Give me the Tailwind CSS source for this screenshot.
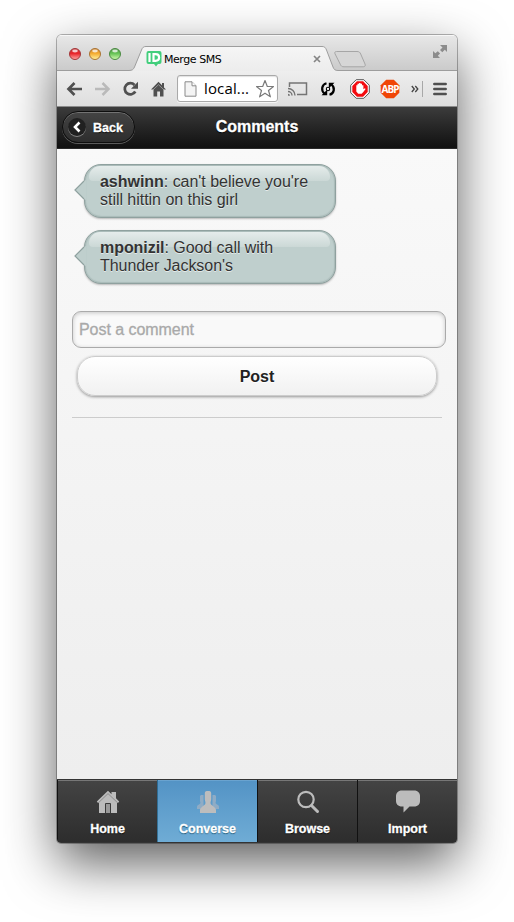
<!DOCTYPE html>
<html lang="en">
<head>
<meta charset="utf-8">
<title>Merge SMS</title>
<script src="https://cdn.jsdelivr.net/npm/@tailwindcss/browser@4"></script>
</head>
<body class="bg-white overflow-hidden font-['Liberation_Sans',Arial,sans-serif]">
<div class="w-[514px] h-[922px] pl-[57px] pt-[35px]">
<div class="w-[400px] h-[808px] flex flex-col rounded-t-[5px] rounded-b-[4px] overflow-hidden shadow-[0_20px_52px_rgba(0,0,0,0.64),0_0_0_1px_rgba(0,0,0,0.28)]">

  <!-- Title bar with tab strip -->
  <div class="relative h-9 shrink-0 bg-linear-to-b from-[#e8e8e8] to-[#cacaca]">
    <svg class="absolute left-0 top-0" width="400" height="37" viewBox="0 0 400 37">
      <defs>
        <linearGradient id="tab" x1="0" y1="0" x2="0" y2="1"><stop offset="0" stop-color="#f6f6f6"/><stop offset="1" stop-color="#ececec"/></linearGradient>
        <linearGradient id="red" x1="0" y1="0" x2="0" y2="1"><stop offset="0" stop-color="#c43a3c"/><stop offset=".45" stop-color="#e9262b"/><stop offset="1" stop-color="#ffaaa6"/></linearGradient>
        <linearGradient id="yel" x1="0" y1="0" x2="0" y2="1"><stop offset="0" stop-color="#c97e2d"/><stop offset=".45" stop-color="#f5ac32"/><stop offset="1" stop-color="#fff3a0"/></linearGradient>
        <linearGradient id="grn" x1="0" y1="0" x2="0" y2="1"><stop offset="0" stop-color="#4e9444"/><stop offset=".45" stop-color="#67c356"/><stop offset="1" stop-color="#d3fbb0"/></linearGradient>
      </defs>
      <path d="M0 .5H400" stroke="#f7f7f7"/>
      <path d="M0 35.5H72c3 0 4.500-1 5.500-3.500L84.500 15c1-2.500 2-3.500 4.500-3.500H265c2.500 0 3.500 1 4.500 3.500L276 32c1 2.500 2 3.500 5 3.500H400V37H0Z" fill="url(#tab)" stroke="#9d9d9d"/>
      <path d="M0 36.500H400" stroke="#eeeeee"/>
      <path d="M279.500 16.500H300c2 0 3 .7 3.700 2.500l4.300 10c.7 1.800 0 2.800-1.800 2.800H287c-2 0-3-.7-3.700-2.500L278 18.800c-.6-1.500 0-2.300 1.500-2.300Z" fill="#d6d6d6" stroke="#a6a6a6"/>
      <g stroke-width="1">
        <circle cx="18" cy="19" r="5.500" fill="url(#red)" stroke="#a2383a"/><ellipse cx="18" cy="16" rx="2.800" ry="1.400" fill="#fff" opacity=".75"/>
        <circle cx="38" cy="19" r="5.500" fill="url(#yel)" stroke="#a97435"/><ellipse cx="38" cy="16" rx="2.800" ry="1.400" fill="#fff" opacity=".75"/>
        <circle cx="58" cy="19" r="5.500" fill="url(#grn)" stroke="#4b8a43"/><ellipse cx="58" cy="16" rx="2.800" ry="1.400" fill="#fff" opacity=".75"/>
      </g>
      <path d="M91.500 16h11a2 2 0 0 1 2 2v9a2 2 0 0 1-2 2H101l-2 2.500L97 29h-5.500a2 2 0 0 1-2-2v-9a2 2 0 0 1 2-2Z" fill="#42ce7c"/>
      <path d="M92.500 18v9M96.500 19.200v6.600h2c4.800 0 4.800-6.600 0-6.600Z" fill="none" stroke="#fff" stroke-width="2.200"/>
      <path d="m257 21 6 6m0-6-6 6" stroke="#858585" stroke-width="1.700"/>
      <g fill="#8c8c8c"><path d="M383 10h7v7l-2.200-2.200-2.500 2.500-2.300-2.300 2.500-2.500Z"/><path d="M376 16v7h7l-2.200-2.200 2.300-2.300-2.300-2.300-2.500 2.100Z"/></g>
    </svg>
    <div class="relative pl-[107px] pt-[18px] text-[11px] leading-[14px] tracking-[-0.45px] text-black whitespace-nowrap font-['DejaVu_Sans',sans-serif]">Merge SMS</div>
  </div>

  <!-- Toolbar -->
  <div class="h-9 shrink-0 flex items-center bg-linear-to-b from-[#eeeeee] to-[#dedede] border-b border-[#8b8b8b] pl-[9px]">
    <svg class="shrink-0" width="17" height="16" viewBox="0 0 17 16"><path d="M16 8H3M8.500 2 2.500 8l6 6" fill="none" stroke="#505050" stroke-width="2.700"/></svg>
    <svg class="shrink-0 ml-[11px]" width="17" height="16" viewBox="0 0 17 16"><path d="M1 8h13M8.500 2l6 6-6 6" fill="none" stroke="#bababa" stroke-width="2.500"/></svg>
    <svg class="shrink-0 ml-[11px]" width="17" height="16" viewBox="0 0 17 16"><path d="M13.300 10.500A5.600 5.600 0 1 1 12.500 4" fill="none" stroke="#505050" stroke-width="2.700"/><path d="M16 .8v7H9Z" fill="#505050"/></svg>
    <svg class="shrink-0 ml-[12px]" width="16" height="16" viewBox="0 0 16 16"><path d="M7.500.8 0 8.500h2.500v7h3.700v-5h2.800v5h3.500v-7H15l-2-2V2h-2v2.300Z" fill="#505050"/><path d="M1.700 9.200 7.500 3.700l5.800 5.500" fill="none" stroke="#c0c0c0" stroke-width=".6"/></svg>
    <div class="shrink-0 ml-[10px] w-[101px] h-[27px] rounded-[3px] border border-[#a9a9a9] bg-white flex items-center pl-[6px] shadow-[inset_0_1px_1px_rgba(0,0,0,0.12),0_1px_0_rgba(255,255,255,0.7)]">
      <svg class="shrink-0" width="13" height="16" viewBox="0 0 13 16"><path d="M1 .8h7l4 4v10.400H1Z" fill="#f4f4f4" stroke="#8a8a8a"/><path d="M8 .8v4h4" fill="#fff" stroke="#8a8a8a"/></svg>
      <span class="ml-[7px] pb-[2px] w-[46px] text-[15px] leading-5 tracking-[0.15px] text-black whitespace-nowrap font-['Open_Sans',sans-serif]">local...</span>
      <svg class="shrink-0 ml-[5px]" width="20" height="20" viewBox="0 0 20 20"><path d="m10 1.500 2.300 6h6.200l-5 4 1.900 6.300L10 14.200l-5.400 3.600 1.900-6.300-5-4h6.200Z" fill="#fff" stroke="#7b7b7b" stroke-width="1.200" stroke-linejoin="round"/></svg>
    </div>
    <svg class="shrink-0 ml-[9px]" width="21" height="16" viewBox="0 0 21 16"><path d="M2.500 6V2h17v11.500H10" fill="none" stroke="#747474" stroke-width="1.500"/><path d="M1 7.500a7 7 0 0 1 7 7M1 10.500a4 4 0 0 1 4 4" fill="none" stroke="#747474" stroke-width="1.400"/><path d="M1 12.800a2 2 0 0 1 2 2H1Z" fill="#747474"/></svg>
    <svg class="shrink-0 ml-[12px]" width="16" height="16" viewBox="0 0 16 16"><path d="M6.500 2.200C1.500 3.500.8 9.500 4.500 12.500M9.500 13.800c5-1.300 5.700-7.300 2-10.300" fill="none" stroke="#000" stroke-width="2.200"/><path d="M1.500 14.300h5.700V8.800ZM14.500 1.700H8.800V7.200Z" fill="#000"/><circle cx="8" cy="8" r="1.700" fill="#eee" stroke="#000" stroke-width="1.100"/></svg>
    <svg class="shrink-0 ml-[14px]" width="20" height="20" viewBox="0 0 20 20"><path d="M6.200.7h7.600l5.500 5.500v7.600l-5.500 5.500H6.200L.7 13.800V6.200Z" fill="#fff" stroke="#555" stroke-width="1"/><path d="M6.900 2.300h6.200l4.600 4.600v6.200l-4.600 4.600H6.900l-4.600-4.600V6.900Z" fill="#f30c10"/><path d="M6.300 6.200h1.200v-1.400h1.500v-.8h1.500v.8H12v1.500h1.400v4l1.400-1 .8.700-2.500 3.300-1.500 1.500H8.200L6.300 12.500Z" fill="#fff"/></svg>
    <div class="shrink-0 ml-[10px] relative w-5 h-5">
      <svg class="absolute inset-0" width="20" height="20" viewBox="0 0 20 20"><path d="M6.200.7h7.600l5.500 5.500v7.600l-5.500 5.500H6.200L.7 13.800V6.200Z" fill="#f04607"/></svg>
      <span class="relative flex items-center justify-center h-5 pt-px text-[10px] font-bold tracking-[-0.9px] text-white font-['Open_Sans',sans-serif]">ABP</span>
    </div>
    <svg class="shrink-0 ml-[11px]" width="8" height="8" viewBox="0 0 8 8"><path d="m.8 1 2.500 3L.8 7M4.300 1l2.500 3-2.500 3" fill="none" stroke="#444" stroke-width="1.300"/></svg>
    <div class="shrink-0 ml-[3px] w-px h-4 bg-[#a8a8a8]"></div>
    <svg class="shrink-0 ml-[10px]" width="14" height="14" viewBox="0 0 14 14"><path d="M1.300 2h11.400M1.300 7h11.400M1.300 12h11.400" stroke="#505050" stroke-width="2.500" stroke-linecap="round"/></svg>
  </div>

  <!-- App header -->
  <div class="relative h-[42px] shrink-0 flex items-center justify-center bg-linear-to-b from-[#3c3c3c] to-[#111111] border-b border-[#2a2a2a]">
    <div class="absolute left-[5px] top-[4px] w-[73px] h-[32px] rounded-full border border-[#0e0e0e] bg-linear-to-b from-[#444444] to-[#2d2d2d] flex items-center pl-[5px] shadow-[inset_0_1px_0_rgba(255,255,255,0.25),0_1px_0_rgba(255,255,255,0.3)]">
      <span class="w-[18px] h-[18px] rounded-full bg-[#202020] flex items-center justify-center shadow-[0_1px_0_rgba(255,255,255,0.4)]">
        <svg width="10" height="12" viewBox="0 0 10 12"><path d="M7.500 1.500 3 6l4.500 4.500" fill="none" stroke="#fff" stroke-width="2.600"/></svg>
      </span>
      <span class="ml-[7px] pt-px text-[12.5px] leading-4 font-bold text-white [-webkit-text-stroke:0.3px_#fff] [text-shadow:0_1px_1px_#000]">Back</span>
    </div>
    <h1 class="text-[16px] leading-5 font-bold text-white pb-[2px] [-webkit-text-stroke:0.3px_#fff] [text-shadow:0_1px_1px_#000]">Comments</h1>
  </div>

  <!-- Comments -->
  <main class="h-[630px] shrink-0 bg-linear-to-b from-[#f9f9f9] to-[#eeeeee] pl-[15px] pt-[15px] text-[16px]">
    <div class="flex flex-col gap-[12px] pl-[12px]">
      <div class="relative w-[252px] h-[54px] rounded-[17px] border-[1.5px] border-[#8fa19f] bg-[#bfcfcd] px-[15px] pt-[8px] leading-[18px] text-[#333333] shadow-[inset_0_0_1px_1px_rgba(143,161,159,0.45),0_1px_2px_rgba(0,0,0,0.25)]">
        <span class="absolute left-[4px] top-[1px] w-[241px] h-[15px] rounded-t-[14px] rounded-b-[5px] bg-linear-to-b from-[#e5eceb] to-[#cbd8d6]"></span>
        <svg class="absolute -left-[11px] top-[14px]" width="12" height="22" viewBox="0 0 12 22"><path d="M12 1 10 2 1 11l9 9 2 1Z" fill="#bfcfcd"/><path d="M10 2 1 11l9 9" fill="none" stroke="#8fa19f" stroke-width="1.200"/></svg>
        <p class="relative tracking-[-0.03px] [text-shadow:0_1px_0_rgba(255,255,255,0.6)]"><b>ashwinn</b>: can't believe you're<br>still hittin on this girl</p>
      </div>
      <div class="relative w-[252px] h-[54px] rounded-[17px] border-[1.5px] border-[#8fa19f] bg-[#bfcfcd] px-[15px] pt-[8px] leading-[18px] text-[#333333] shadow-[inset_0_0_1px_1px_rgba(143,161,159,0.45),0_1px_2px_rgba(0,0,0,0.25)]">
        <span class="absolute left-[4px] top-[1px] w-[241px] h-[15px] rounded-t-[14px] rounded-b-[5px] bg-linear-to-b from-[#e5eceb] to-[#cbd8d6]"></span>
        <svg class="absolute -left-[11px] top-[14px]" width="12" height="22" viewBox="0 0 12 22"><path d="M12 1 10 2 1 11l9 9 2 1Z" fill="#bfcfcd"/><path d="M10 2 1 11l9 9" fill="none" stroke="#8fa19f" stroke-width="1.200"/></svg>
        <p class="relative tracking-[-0.05px] [text-shadow:0_1px_0_rgba(255,255,255,0.6)]"><b>mponizil</b>: Good call with<br>Thunder Jackson's</p>
      </div>
    </div>
    <div class="mt-[27px] w-[374px] h-[37px] rounded-[9px] border border-[#aaaaaa] bg-[#f9f9f9] flex items-center px-[6px] text-[#a9a9a9] tracking-[-0.05px] [-webkit-text-stroke:0.3px_#a9a9a9] shadow-[inset_0_1px_4px_rgba(0,0,0,0.2)]">Post a comment</div>
    <div class="mt-[8px] ml-[5px] w-[360px] h-[40px] rounded-[18px] border border-[#cccccc] bg-linear-to-b from-white to-[#f1f1f1] flex items-center justify-center font-bold text-[#222222] shadow-[0_1px_3px_rgba(0,0,0,0.4)] [text-shadow:0_1px_0_#fff]"><span class="pt-px">Post</span></div>
    <div class="mt-[21px] w-[370px] h-px bg-[#cccccc]"></div>
  </main>

  <!-- Bottom navigation -->
  <nav class="flex-1 grid grid-cols-4 border-t border-b border-[#333333] text-[12.5px] font-bold leading-4 text-white text-center [-webkit-text-stroke:0.3px_#fff] [text-shadow:0_1px_1px_#000]">
    <div class="border-l border-[#111111] shadow-[inset_0_1px_0_#777777] bg-linear-to-b from-[#444444] to-[#2d2d2d] flex flex-col items-center pt-[10px]">
      <svg width="24" height="24" viewBox="0 0 24 24"><path d="M.8 11.500 12 .8l3.500 3.400V2H20v6.200l3.200 3.300-1 1.200H21V23H3V12.700H1.800Z" fill="#bcbcbc"/><path d="M2.500 12.700 12 3.600l9.500 9.100" fill="none" stroke="#777" stroke-width=".7"/><path d="M9.500 23V13.500h5V23" fill="#999" stroke="#3a3a3a"/></svg>
      <span class="mt-[7px]">Home</span>
    </div>
    <div class="border-l border-[#145072]/60 shadow-[inset_0_1px_0_#6aa3cf] bg-linear-to-b from-[#5393c5] to-[#6facd5] flex flex-col items-center pt-[10px] [text-shadow:0_1px_1px_#145072]">
      <svg width="24" height="24" viewBox="0 0 24 24"><path d="M5 5h2.500v14H1v-2.500c0-1.500 3-2 3.500-3.500L4 11V6ZM16.500 5H19l1 1v5l-.5 2c.5 1.500 3.500 2 3.500 3.500V19h-6.500Z" fill="#8facc5"/><path d="M10.800 1h2.400c1.300 0 2 1 2 2.500V9c0 1.500-.7 2.500-.7 4 0 2.500 5.500 4 5.500 7v3H4v-3c0-3 5.500-4.500 5.500-7 0-1.500-.7-2.500-.7-4V3.500C8.800 2 9.500 1 10.800 1Z" fill="#bdbdbd"/></svg>
      <span class="mt-[7px]">Converse</span>
    </div>
    <div class="border-l border-[#111111] shadow-[inset_0_1px_0_#777777] bg-linear-to-b from-[#444444] to-[#2d2d2d] flex flex-col items-center pt-[10px]">
      <svg width="24" height="24" viewBox="0 0 24 24"><circle cx="10" cy="9.500" r="7.700" fill="none" stroke="#bcbcbc" stroke-width="2.200"/><path d="m15.500 15.500 6 6" stroke="#bcbcbc" stroke-width="3" stroke-linecap="round"/></svg>
      <span class="mt-[7px]">Browse</span>
    </div>
    <div class="border-l border-[#111111] shadow-[inset_0_1px_0_#777777] bg-linear-to-b from-[#444444] to-[#2d2d2d] flex flex-col items-center pt-[10px]">
      <svg width="24" height="24" viewBox="0 0 24 24"><path d="M6 .5h12c4 0 6 2.500 6 5.500v5c0 3-2 5.500-6 5.500h-4.500L7.500 22.500v-6H6c-4 0-6-2.500-6-5.500V6C0 3 2 .5 6 .5Z" fill="#bcbcbc"/></svg>
      <span class="mt-[7px]">Import</span>
    </div>
  </nav>
</div>
</div>
</body>
</html>
